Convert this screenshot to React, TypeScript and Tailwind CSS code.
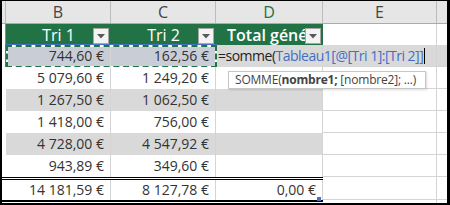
import React from 'react';

const rows: [string, string][] = [
  ['744,60\u00a0€', '162,56\u00a0€'],
  ['5\u00a0079,60\u00a0€', '1\u00a0249,20\u00a0€'],
  ['1\u00a0267,50\u00a0€', '1\u00a0062,50\u00a0€'],
  ['1\u00a0418,00\u00a0€', '756,00\u00a0€'],
  ['4\u00a0728,00\u00a0€', '4\u00a0547,92\u00a0€'],
  ['943,89\u00a0€', '349,60\u00a0€'],
];

const cols = 'grid grid-cols-[4px_105px_105px_107px_114px_1fr]';
const line = 'border-r border-[#d4d4d4]';

function Dropdown() {
  return (
    <div className="absolute right-[2px] top-[4px] w-[16px] h-[16px] bg-[#f3f3f3] border border-[#a6a6a6] flex items-center justify-center">
      <svg width="8" height="5" viewBox="0 0 8 5">
        <path d="M0 0 H8 L4 4.5 Z" fill="#595959" />
      </svg>
    </div>
  );
}

function Num({ v, className = '' }: { v: string; className?: string }) {
  return (
    <div className={`flex items-center justify-end pr-[6px] text-[14px] text-[#333] ${className}`}>
      {v}
    </div>
  );
}

export default function App() {
  return (
    <div className="w-[450px] h-[205px] border-t border-l-2 border-r-[3px] border-b-2 border-black bg-white overflow-hidden font-['Segoe_UI','Open_Sans',sans-serif] leading-none">
      {/* column letters */}
      <div className={`${cols} h-[23px] bg-[#e6e6e6] border-b border-[#ababab] text-[16px] text-[#444]`}>
        <div className="border-r border-[#bcbcbc]" />
        <div className="border-r border-[#bcbcbc] flex items-center justify-center">B</div>
        <div className="border-r border-[#bcbcbc] flex items-center justify-center">C</div>
        <div className="border-r border-[#bcbcbc] flex items-center justify-center text-[#217346]">D</div>
        <div className="border-r border-[#bcbcbc] flex items-center justify-center">E</div>
        <div />
      </div>

      {/* table header */}
      <div className={`${cols} h-[21px] text-[16px] text-white`}>
        <div className="bg-white border-r border-[#8a8a8a]" />
        <div className="relative bg-[#217346] flex items-center justify-center">
          Tri 1
          <Dropdown />
        </div>
        <div className="relative bg-[#217346] flex items-center justify-center">
          Tri 2
          <Dropdown />
        </div>
        <div className="relative bg-[#217346]">
          <div className="h-full w-[89px] overflow-hidden whitespace-nowrap flex items-center pl-[11px] font-semibold">
            Total général
          </div>
          <Dropdown />
        </div>
        <div className={line} />
        <div />
      </div>

      {/* data rows */}
      {rows.map(([b, c], i) => {
        const band = i % 2 === 0;
        const first = i === 0;
        return (
          <div key={i} className={`${cols} h-[22px] relative`}>
            <div className="bg-white" />
            <Num v={b} className={`${line} ${first ? 'bg-[#c9ced6]' : band ? 'bg-[#d9d9d9]' : 'bg-white'}`} />
            <Num v={c} className={`${line} ${first ? 'bg-[#c9ced6]' : band ? 'bg-[#d9d9d9]' : 'bg-white'}`} />
            <div className={`${line} ${band ? 'bg-[#d9d9d9]' : 'bg-white'}`} />
            <div className={`${line} border-b ${first ? 'bg-[#d9d9d9]' : 'bg-white'}`} />
            <div className={`border-b border-[#d4d4d4] ${first ? 'bg-[#d9d9d9]' : 'bg-white'}`} />
            {first && (
              <>
                {/* referenced range marquee */}
                <div className="absolute left-[3px] top-[-1px] w-[212px] h-[24px] border-l border-t border-[#4472c4]">
                  <div className="absolute inset-0 border-2 border-white" />
                  <div className="absolute inset-0 border-2 border-dashed border-[#217346]" />
                </div>
                {/* cell editor */}
                <div className="absolute left-[216px] top-0 h-full flex items-center text-[14px] tracking-[-0.5px] whitespace-nowrap">
                  <span className="text-[#222]">=somme(</span>
                  <span className="text-[#3f6fc6]">Tableau1[@[Tri 1]:[Tri 2]]</span>
                  <span className="ml-[1px] w-px h-[16px] bg-black" />
                </div>
                {/* function tooltip */}
                <div className="absolute left-[226px] top-[26px] w-[198px] h-[18px] bg-white border border-[#c6c6c6] shadow-[1px_1px_2px_rgba(0,0,0,0.15)] flex items-center pl-[6px] text-[12px] tracking-[-0.2px] text-[#444] whitespace-nowrap z-10">
                  SOMME(<span className="font-bold">nombre1;</span>&nbsp;[nombre2]; ...)
                </div>
              </>
            )}
          </div>
        );
      })}

      {/* double line */}
      <div className={`${cols} h-[3px]`}>
        <div className="col-span-4 border-y border-black" />
        <div className={line} />
        <div />
      </div>

      {/* totals */}
      <div className={`${cols} h-[20px]`}>
        <div />
        <Num v={'14\u00a0181,59\u00a0€'} className={line} />
        <Num v={'8\u00a0127,78\u00a0€'} className={line} />
        <div className={`relative ${line}`}>
          <Num v={'0,00\u00a0€'} className="h-full" />
          <div className="absolute right-[1px] bottom-[-1px] w-[4px] h-[4px] bg-[#4472c4]" />
        </div>
        <div className={`${line} border-b`} />
        <div className="border-b border-[#d4d4d4]" />
      </div>

      {/* table bottom */}
      <div className={`${cols} h-[2px]`}>
        <div className="col-span-4 bg-black" />
        <div className={line} />
        <div />
      </div>
      <div className={`${cols} h-[1px]`}>
        <div className="col-span-4" />
        <div className={line} />
        <div />
      </div>
    </div>
  );
}
